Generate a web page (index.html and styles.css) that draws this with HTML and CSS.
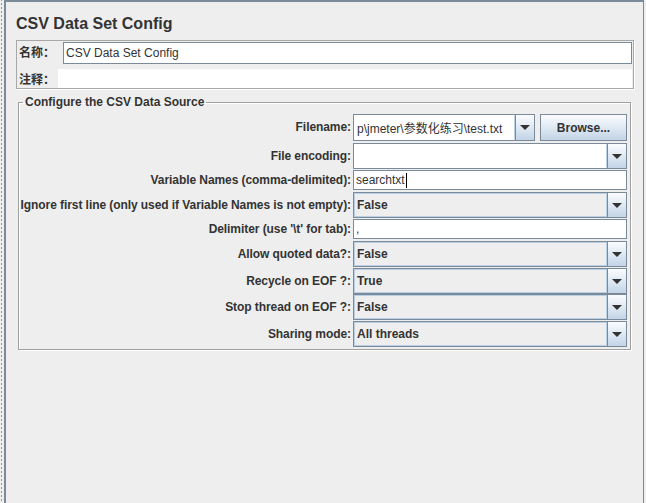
FILE: index.html
```html
<!DOCTYPE html>
<html lang="en">
  <head>
    <meta charset="UTF-8" />
    <title>CSV Data Set Config</title>
    <link rel="stylesheet" href="styles.css">
  </head>
  <body>
    <div class="frame">
      <div class="gutter"></div>
      <div class="editor">
        <h1 class="title">CSV Data Set Config</h1>

        <!-- name / comment -->
        <div class="name-panel">
          <label class="cjk">名称：</label>
          <div class="field name-field">CSV Data Set Config</div>
          <label class="cjk">注释：</label>
          <div class="comment"></div>
        </div>

        <!-- data source settings -->
        <fieldset class="source">
          <legend>Configure the CSV Data Source</legend>

          <label class="lbl h27">Filename:</label>
          <div class="file-row">
            <div class="combo editable h27">
              <div class="value cjk-mix">p\jmeter\参数化练习\test.txt</div>
              <div class="arrow"><span></span></div>
            </div>
            <button class="browse">Browse...</button>
          </div>

          <label class="lbl h26">File encoding:</label>
          <div class="combo editable h26">
            <div class="value"></div>
            <div class="arrow"><span></span></div>
          </div>

          <label class="lbl h20">Variable Names (comma-delimited):</label>
          <div class="field text">searchtxt<span class="caret"></span></div>

          <label class="lbl h26">Ignore first line (only used if Variable Names is not empty):</label>
          <div class="combo h26">
            <div class="value">False</div>
            <div class="arrow"><span></span></div>
          </div>

          <label class="lbl h20">Delimiter (use '\t' for tab):</label>
          <div class="field text">,</div>

          <label class="lbl h26">Allow quoted data?:</label>
          <div class="combo h26">
            <div class="value">False</div>
            <div class="arrow"><span></span></div>
          </div>

          <label class="lbl h26">Recycle on EOF ?:</label>
          <div class="combo h26">
            <div class="value">True</div>
            <div class="arrow"><span></span></div>
          </div>

          <label class="lbl h26">Stop thread on EOF ?:</label>
          <div class="combo h26">
            <div class="value">False</div>
            <div class="arrow"><span></span></div>
          </div>

          <label class="lbl h26">Sharing mode:</label>
          <div class="combo h26">
            <div class="value">All threads</div>
            <div class="arrow"><span></span></div>
          </div>
        </fieldset>
      </div>
    </div>
  </body>
</html>
```

FILE: styles.css
```css
body {
  margin: 0;
  background-color: #eeeeee;
  font-family: "Liberation Sans", Arial, "Noto Sans CJK SC", sans-serif;
  font-size: 12px;
  color: #333333;
}

.frame {
  display: flex;
  height: 503px;
}

.gutter {
  width: 4px;
  background: linear-gradient(to bottom, #8d9aa7 50%, transparent 50%) 1px 3px / 1px 4px repeat-y;
}

.editor {
  width: 637px;
  border-top: 2px solid #7a8a99;
  border-left: 2px solid #7a8a99;
  border-right: 1px solid #7a8a99;
}

.title {
  margin: 12px 0 6px 10px;
  font-size: 16px;
  line-height: 20px;
  font-weight: bold;
}

.cjk {
  font-family: "Noto Sans CJK SC", sans-serif;
  font-weight: bold;
  font-size: 12px;
}

.cjk-mix {
  font-family: "Liberation Sans", "Noto Sans CJK SC", sans-serif;
}

/* name / comment panel */
.name-panel {
  width: 614px;
  margin-left: 10px;
  padding: 1px 1px 0 1px;
  display: grid;
  grid-template-columns: 40px 1fr;
  grid-template-rows: 22px 19px;
  row-gap: 5px;
  border: 1px solid #a8a8a8;
  box-shadow: 1px 1px 0 #ffffff;
}

.name-panel label {
  padding-left: 1px;
  line-height: 20px;
}

.field {
  box-sizing: border-box;
  background: #ffffff;
  border: 1px solid #7a8a99;
  padding: 0 2px;
  white-space: nowrap;
  overflow: hidden;
}

.name-field {
  margin-left: 5px;
  line-height: 20px;
}

.comment {
  background: #ffffff;
}

/* data source fieldset */
.source {
  width: 608px;
  margin: 6px 0 0 12px;
  padding: 5px 3px 2px 0;
  border: 1px solid #a0a0a0;
  box-shadow: inset 1px 1px 0 #ffffff, 1px 1px 0 #ffffff;
  display: grid;
  grid-template-columns: 332px 274px;
  grid-template-rows: 29px 27px 22px 27px 22px 27px 26px 27px 26px;
  column-gap: 2px;
  align-items: start;
}

.source legend {
  margin-left: 4px;
  padding: 0 2px;
  line-height: 14px;
  font-weight: bold;
}

.lbl {
  text-align: right;
  font-weight: bold;
  letter-spacing: -0.07px;
  white-space: nowrap;
}

.lbl.h27 { line-height: 27px; }
.lbl.h26 { line-height: 26px; }
.lbl.h20 { line-height: 20px; }

.text {
  height: 20px;
  line-height: 18px;
}

.caret {
  display: inline-block;
  width: 1px;
  height: 15px;
  background: #000000;
  vertical-align: middle;
  margin-left: 1px;
}

/* combo boxes */
.combo {
  box-sizing: border-box;
  display: flex;
  border: 1px solid #7a8a99;
}

.combo.h27 { height: 27px; }
.combo.h26 { height: 26px; }

.combo .value {
  flex: 1;
  min-width: 0;
  padding: 0 2px;
  border: 1px solid #b8cfe5;
  background: #eeeeee;
  font-weight: bold;
  display: flex;
  align-items: center;
  white-space: nowrap;
  overflow: hidden;
}

.combo.editable .value {
  background: #ffffff;
  border-color: #ffffff #b8cfe5 #ffffff #ffffff;
  font-weight: normal;
}

.arrow {
  width: 18px;
  border-left: 1px solid #7a8a99;
  background: linear-gradient(#fbfcfe, #dce7f2 55%, #c3d4e6);
  display: flex;
  align-items: center;
  justify-content: center;
}

.arrow span {
  width: 0;
  height: 0;
  border-left: 5px solid transparent;
  border-right: 5px solid transparent;
  border-top: 5px solid #333333;
}

.file-row {
  display: flex;
  gap: 5px;
}

.file-row .combo {
  width: 182px;
}

.browse {
  flex: 1;
  height: 27px;
  border: 1px solid #7a8a99;
  background: linear-gradient(#fbfcfe, #dce7f2 55%, #c3d4e6);
  font-family: "Liberation Sans", Arial, sans-serif;
  font-size: 12px;
  font-weight: bold;
  color: #333333;
  padding: 0;
}
```
